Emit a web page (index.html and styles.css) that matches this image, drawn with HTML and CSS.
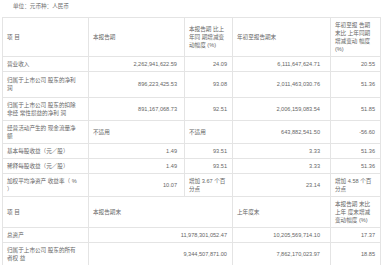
FILE: index.html
```html
<!DOCTYPE html>
<html lang="zh">
<head>
<meta charset="utf-8">
<link rel="stylesheet" href="styles.css">
</head>
<body>
<div class="page">
  <div class="unit">单位：元币种：人民币</div>
  <table class="fin">
    <colgroup>
      <col class="w1"><col class="w2"><col class="w3"><col class="w4"><col class="w5">
    </colgroup>
    <tr class="head">
      <td>项 目</td>
      <td>本报告期</td>
      <td>本报告期 比上<br>年同 期增减变<br>动幅度 (%)</td>
      <td>年初至报告期末</td>
      <td>年初至报 告期<br>末比 上年同期<br>增减变动 幅度<br>(%)</td>
    </tr>
    <tr>
      <td>营业收入</td>
      <td class="n c2">2,262,941,622.59</td>
      <td class="n c3">24.09</td>
      <td class="n c4">6,111,647,624.71</td>
      <td class="n c5">20.55</td>
    </tr>
    <tr class="tall">
      <td>归属于上市公司 股东的净利<br>润</td>
      <td class="n c2">896,223,425.53</td>
      <td class="n c3">93.08</td>
      <td class="n c4">2,011,463,030.76</td>
      <td class="n c5">51.36</td>
    </tr>
    <tr>
      <td>归属于上市公司 股东的扣除<br>非经 常性损益的净利 润</td>
      <td class="n c2">891,167,068.73</td>
      <td class="n c3">92.51</td>
      <td class="n c4">2,006,159,083.54</td>
      <td class="n c5">51.85</td>
    </tr>
    <tr>
      <td>经营活动产生的 现金流量净<br>额</td>
      <td>不适用</td>
      <td>不适用</td>
      <td class="n c4">643,882,541.50</td>
      <td class="n c5">-56.60</td>
    </tr>
    <tr>
      <td>基本每股收益（元／股）</td>
      <td class="n c2">1.49</td>
      <td class="n c3">93.51</td>
      <td class="n c4">3.33</td>
      <td class="n c5">51.36</td>
    </tr>
    <tr>
      <td>稀释每股收益（元／股）</td>
      <td class="n c2">1.49</td>
      <td class="n c3">93.51</td>
      <td class="n c4">3.33</td>
      <td class="n c5">51.36</td>
    </tr>
    <tr>
      <td>加权平均净资产 收益率（ %<br>）</td>
      <td class="n c2">10.07</td>
      <td>增加 3.67 个百<br>分点</td>
      <td class="n c4">23.14</td>
      <td>增加 4.58 个百<br>分点</td>
    </tr>
    <tr class="head2">
      <td>项 目</td>
      <td colspan="2">本报告期末</td>
      <td>上年度末</td>
      <td>本报告期 末比<br>上年 度末增减<br>变动幅度 (%)</td>
    </tr>
    <tr>
      <td>总资产</td>
      <td colspan="2" class="n c3">11,978,301,052.47</td>
      <td class="n c4">10,205,569,714.10</td>
      <td class="n c5">17.37</td>
    </tr>
    <tr>
      <td>归属于上市公司 股东的所有<br>者权 益</td>
      <td colspan="2" class="n c3">9,344,507,871.00</td>
      <td class="n c4">7,862,170,023.97</td>
      <td class="n c5">18.85</td>
    </tr>
  </table>
</div>
</body>
</html>
```
FILE: styles.css
```css
html, body {
  margin: 0;
  padding: 0;
  background: #ffffff;
}
.page {
  padding: 0 1px 0 2px;
  font-family: "Liberation Sans", "Noto Sans CJK SC", sans-serif;
  font-size: 5.6px;
  color: #666666;
}
.unit {
  height: 17px;
  line-height: 12px;
  padding-left: 11px;
  color: #707070;
}
.fin {
  border-collapse: collapse;
  table-layout: fixed;
  width: 378px;
}
.w1 { width: 86px; }
.w2 { width: 96px; }
.w3 { width: 48px; }
.w4 { width: 98px; }
.w5 { width: 50px; }
.fin td {
  border: 1px solid #e4e4e4;
  padding: 3px 4px 3px 4px;
  line-height: 8px;
  vertical-align: middle;
  text-align: left;
  white-space: nowrap;
}
.fin tr.tall td {
  padding-top: 4px;
  padding-bottom: 5px;
}
.fin td.n { text-align: right; }
.fin td.c2 { padding-right: 7px; }
.fin td.c3 { padding-right: 5px; }
.fin td.c4 { padding-right: 10px; }
.fin td.c5 { padding-right: 5px; }
```
